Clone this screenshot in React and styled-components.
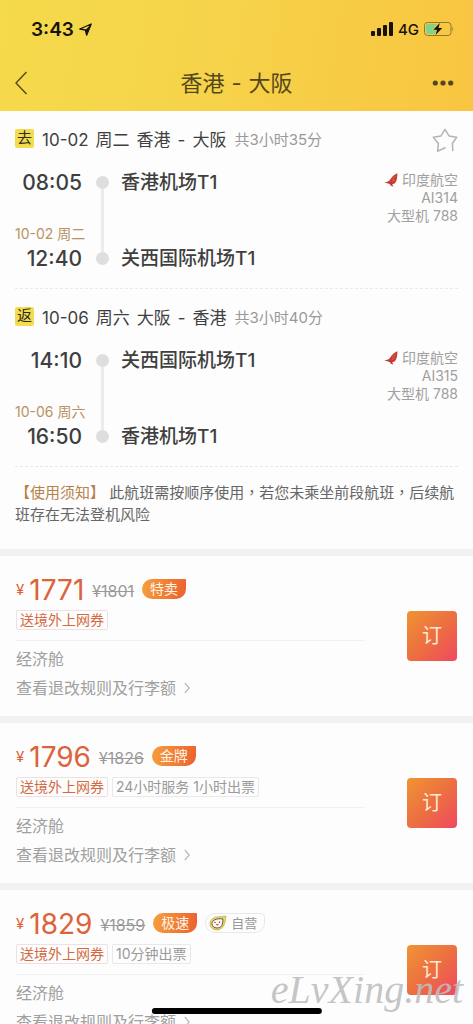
import React from "react";
import styled, { createGlobalStyle } from "styled-components";

const GlobalStyle = createGlobalStyle`
  *, *::before, *::after { box-sizing: border-box; }
  body {
    margin: 0;
    background: #fdfdfd;
    color: #3f3f3f;
    font-family: Inter, "Noto Sans CJK SC", sans-serif;
  }
  button { font: inherit; color: inherit; border: 0; padding: 0; background: none; cursor: pointer; }
  a { color: inherit; text-decoration: none; }
  h1, h2, p { margin: 0; font-weight: 400; }
  svg { display: block; flex: none; }
`;

const Screen = styled.div`
  position: relative;
  display: flex;
  flex-direction: column;
  height: 100vh;
  overflow: hidden;
`;

const Header = styled.header`
  flex: none;
  background: linear-gradient(100deg, #f5da4b 0%, #f6d34a 45%, #f9c540 100%);
`;

const StatusBar = styled.div`
  display: flex;
  align-items: center;
  justify-content: space-between;
  height: 58px;
  padding: 0 19px 0 31px;
  color: #17130a;
`;

const StatusGroup = styled.div`
  display: flex;
  align-items: center;
  gap: 5px;
`;

const Clock = styled.span`
  font-size: 19px;
  font-weight: 600;
`;

const Network = styled.span`
  font-size: 15px;
  font-weight: 500;
`;

const NavBar = styled.nav`
  display: flex;
  align-items: center;
  justify-content: space-between;
  height: 53px;
  padding: 0 14px 3px;
  color: #54471b;
`;

const Title = styled.h1`
  display: flex;
  align-items: baseline;
  gap: 7px;
  font-size: 22px;
  line-height: 32px;
`;

const NavButton = styled.button`
  display: flex;
  align-items: center;
  justify-content: ${(p) => (p.$end ? "flex-end" : "flex-start")};
  width: 32px;
  height: 32px;
  padding-right: ${(p) => (p.$end ? "5px" : "0")};
`;

const Content = styled.main`
  flex: 1;
  min-height: 0;
  overflow-y: auto;
  scrollbar-width: none;
`;

const Segment = styled.section`
  margin: 0 15px;
  padding: 17px 0;
  border-bottom: 1px dashed #e9e9e9;
`;

const SegmentHead = styled.div`
  display: flex;
  align-items: center;
  height: 24px;
  gap: 8px;
`;

const DirectionBadge = styled.span`
  width: 19px;
  height: 19px;
  margin-bottom: 4px;
  border-radius: 2px;
  background: #f3dc4e;
  color: #2e2a18;
  font-size: 15px;
  line-height: 18px;
  text-align: center;
`;

const Route = styled.h2`
  display: flex;
  align-items: baseline;
  gap: 7px;
  font-size: 17px;
  line-height: 24px;
  white-space: nowrap;
`;

const Duration = styled.span`
  color: #999;
  font-size: 15px;
  line-height: 24px;
  white-space: nowrap;
`;

const StarButton = styled.button`
  margin-left: auto;
`;

const SegmentBody = styled.div`
  display: flex;
  margin-top: 19px;
`;

const Times = styled.div`
  display: flex;
  flex-direction: column;
  width: 67px;
  font-size: 21px;
  font-weight: 500;
  line-height: 24px;
  text-align: right;
`;

const ArrivalDate = styled.span`
  margin: 29px 0 3px;
  color: #b99262;
  font-size: 14px;
  font-weight: 400;
  line-height: 20px;
  text-align: left;
  white-space: nowrap;
`;

const Rail = styled.div`
  display: flex;
  flex-direction: column;
  align-items: center;
  width: 13px;
  margin: 5px 12px 6px 14px;
`;

const Stop = styled.span`
  width: 13px;
  height: 13px;
  border-radius: 50%;
  background: #dedede;
`;

const Track = styled.span`
  flex: 1;
  width: 3px;
  background: #ececec;
`;

const Airports = styled.div`
  display: flex;
  flex: 1;
  flex-direction: column;
  justify-content: space-between;
  font-size: 19px;
  font-weight: 500;
  line-height: 24px;
  white-space: nowrap;
`;

const Carrier = styled.div`
  display: flex;
  flex-direction: column;
  align-items: flex-end;
  color: #a0a0a0;
  font-size: 14px;
  line-height: 18px;
`;

const CarrierName = styled.span`
  display: flex;
  align-items: center;
  gap: 4px;
`;

const Notice = styled.p`
  padding: 15px 15px 23px;
  color: #666;
  font-family: Inter, "Noto Sans CJK TC", sans-serif;
  font-size: 15px;
  line-height: 22px;
`;

const NoticeLabel = styled.span`
  color: #b5814a;
`;

const Fare = styled.article`
  display: flex;
  align-items: flex-start;
  padding: 18px 16px 16px;
  border-top: 7px solid #f2f2f2;
`;

const FareInfo = styled.div`
  flex: 1;
  margin-right: 43px;
`;

const PriceRow = styled.div`
  display: flex;
  align-items: center;
  height: 30px;
`;

const Price = styled.span`
  display: flex;
  align-items: center;
  gap: 5px;
  margin-top: 2px;
  color: #dc633a;
  font-size: 28px;
  line-height: 30px;
`;

const Currency = styled.span`
  font-size: 15px;
`;

const OldPrice = styled.del`
  margin: 4px 8px 0;
  color: #999;
  font-size: 16px;
  line-height: 20px;
`;

const Promo = styled.span`
  height: 20px;
  padding: 0 8px;
  border-radius: 10px 1px 10px 10px;
  background: linear-gradient(100deg, #f6a03c, #ec6030);
  color: #fff5e8;
  font-size: 14px;
  line-height: 20px;
`;

const SelfRun = styled.span`
  display: flex;
  align-items: center;
  gap: 4px;
  height: 20px;
  margin-left: 8px;
  padding: 0 7px 0 3px;
  border: 1px solid #e8e8e8;
  border-radius: 10px 4px 10px 10px;
  color: #999;
  font-size: 13px;
  line-height: 18px;
`;

const Tags = styled.div`
  display: flex;
  gap: 4px;
  margin-top: 6px;
`;

const Tag = styled.span`
  height: 20px;
  padding: 0 3px;
  border: 1px solid ${(p) => (p.$accent ? "#f1e0e0" : "#e9e9e9")};
  border-radius: 2px;
  color: ${(p) => (p.$accent ? "#d36a42" : "#999")};
  font-size: 14px;
  line-height: 18px;
  white-space: nowrap;
`;

const Details = styled.div`
  display: flex;
  flex-direction: column;
  align-items: flex-start;
  gap: 5px;
  margin-top: 10px;
  padding-top: 6px;
  border-top: 1px solid #f0f0f0;
  color: #a0a0a0;
  font-size: 16px;
  line-height: 24px;
`;

const RulesLink = styled.a`
  display: flex;
  align-items: center;
  gap: 8px;
`;

const BookButton = styled.button`
  flex: none;
  width: 50px;
  height: 50px;
  margin-top: 37px;
  border-radius: 4px;
  background: linear-gradient(135deg, #f09434 0%, #ec7040 50%, #f04860 100%);
  color: #ffe9d6;
  font-size: 20px;
  line-height: 50px;
`;

const Watermark = styled.span`
  position: absolute;
  right: 10px;
  bottom: 10px;
  color: rgba(190, 190, 190, 0.9);
  font-family: "Liberation Serif", serif;
  font-size: 40px;
  font-style: italic;
  line-height: 48px;
  pointer-events: none;
`;

const HomeIndicator = styled.span`
  position: absolute;
  left: 50%;
  bottom: 10px;
  width: 36%;
  height: 6px;
  border-radius: 3px;
  background: #000;
  transform: translateX(-50%);
`;

const LocationIcon = () => (
  <svg width="13" height="13" viewBox="0 0 13 13">
    <path d="M12.2 1 L7.6 12.2 L6.4 7 L0.8 6 Z" fill="none" stroke="#17130a" strokeWidth="1.3" strokeLinejoin="round" />
    <path d="M12.2 1 L7.6 12.2 L6.4 7 Z" fill="#17130a" />
  </svg>
);

const SignalIcon = () => (
  <svg width="22" height="14" viewBox="0 0 22 14" fill="#17130a">
    <rect x="0" y="9" width="4" height="5" rx="1" />
    <rect x="6" y="6" width="4" height="8" rx="1" />
    <rect x="12" y="3" width="4" height="11" rx="1" />
    <rect x="18" y="0" width="4" height="14" rx="1" />
  </svg>
);

const BatteryIcon = () => (
  <svg width="30" height="14" viewBox="0 0 30 14">
    <rect x="0.5" y="0.5" width="26.5" height="13" rx="3" fill="none" stroke="#8b7a38" />
    <path d="M28.2 4.6 Q30 7 28.2 9.4 Z" fill="#8b7a38" />
    <path d="M4 2 H13 L8 8 H12 L11 12 H4 Q2 12 2 10 V4 Q2 2 4 2Z" fill="#7ed488" />
    <path d="M15.8 1 L9.3 7.8 H13 L11.6 13 L18.3 6.1 H14.5 Z" fill="#17130a" />
  </svg>
);

const BackIcon = () => (
  <svg width="14" height="24" viewBox="0 0 14 24">
    <path d="M12.5 1 L2 12 L12.5 23" fill="none" stroke="currentColor" strokeWidth="1.4" />
  </svg>
);

const MoreIcon = () => (
  <svg width="22" height="6" viewBox="0 0 22 6" fill="currentColor">
    <circle cx="3.3" cy="3" r="2.6" />
    <circle cx="11" cy="3" r="2.6" />
    <circle cx="18.7" cy="3" r="2.6" />
  </svg>
);

const StarIcon = () => (
  <svg width="26" height="25" viewBox="0 0 26 25">
    <path
      d="M20.8 22.5 L20.4 15.3 L24.7 9.3 L17 7.9 L13 1.4 L9 7.9 L1.3 9.3 L6.4 15.4 L5.6 23.2 L13 19.8"
      fill="none"
      stroke="#b4b4b4"
      strokeWidth="1.5"
      strokeLinecap="round"
      strokeLinejoin="round"
    />
  </svg>
);

const CarrierLogo = () => (
  <svg width="14" height="14" viewBox="0 0 14 14">
    <path d="M13.4 0.2 C13.4 4.6 12.8 8.6 10.6 10.6 L8.2 11.2 L9.4 13.6 C7.4 13.3 6.2 12.2 5.6 11 L0.2 9.2 C3.6 8.8 5 8.2 6.2 6.4 C8.4 3.2 10.6 1.4 13.4 0.2Z" fill="#c23b34" />
    <path d="M8.2 6.2 L11.8 3.4 M7.8 8.6 L11 6.6" stroke="#e98a52" strokeWidth="0.6" />
  </svg>
);

const ChevronIcon = () => (
  <svg width="6" height="12" viewBox="0 0 6 12">
    <path d="M0.8 1 L5.2 6 L0.8 11" fill="none" stroke="#b8b8b8" strokeWidth="1.2" />
  </svg>
);

const MascotIcon = () => (
  <svg width="18" height="16" viewBox="0 0 18 16">
    <path d="M17 1 C16.6 4.4 16.4 7 15 10 C13.6 13.4 11 15 7.8 15 C3.8 15 1 12.2 1 8.7 C1 5 4 2.6 7.6 2 C10.8 1.4 14 1.8 17 1Z" fill="#f0da58" stroke="#a09a50" strokeWidth="0.6" />
    <path d="M13.8 3.8 C14.2 9.6 12.4 13 8 13 C5 13 3 11.2 3 8.6 C3 4.8 7.6 3.4 13.8 3.8Z" fill="#fff6f3" stroke="#5f5a48" strokeWidth="1" />
    <circle cx="6" cy="7.4" r="0.7" fill="#5a3d3d" />
    <circle cx="10.6" cy="7.2" r="0.7" fill="#5a3d3d" />
    <path d="M6.6 9 Q8.4 12 10 9Z" fill="#d9566a" />
  </svg>
);

const segments = [
  {
    direction: "去", day: "10-02", weekday: "周二", origin: "香港", destination: "大阪", duration: "共3小时35分",
    depart: "08:05", from: "香港机场T1", arrive: "12:40", to: "关西国际机场T1",
    flight: "AI314", favourite: true,
  },
  {
    direction: "返", day: "10-06", weekday: "周六", origin: "大阪", destination: "香港", duration: "共3小时40分",
    depart: "14:10", from: "关西国际机场T1", arrive: "16:50", to: "香港机场T1",
    flight: "AI315",
  },
];

const fares = [
  { price: "1771", old: "¥1801", promo: "特卖" },
  { price: "1796", old: "¥1826", promo: "金牌", service: "24小时服务 1小时出票" },
  { price: "1829", old: "¥1859", promo: "极速", service: "10分钟出票", selfRun: true },
];

export default function App() {
  return (
    <Screen>
      <GlobalStyle />
      <Header>
        <StatusBar>
          <StatusGroup>
            <Clock>3:43</Clock>
            <LocationIcon />
          </StatusGroup>
          <StatusGroup>
            <SignalIcon />
            <Network>4G</Network>
            <BatteryIcon />
          </StatusGroup>
        </StatusBar>
        <NavBar>
          <NavButton aria-label="返回"><BackIcon /></NavButton>
          <Title><span>香港</span><span>-</span><span>大阪</span></Title>
          <NavButton $end aria-label="更多"><MoreIcon /></NavButton>
        </NavBar>
      </Header>
      <Content>
        {segments.map((s) => (
          <Segment key={s.flight}>
            <SegmentHead>
              <DirectionBadge>{s.direction}</DirectionBadge>
              <Route>
                <span>{s.day}</span>
                <span>{s.weekday}</span>
                <span>{s.origin}</span>
                <span>-</span>
                <span>{s.destination}</span>
              </Route>
              <Duration>{s.duration}</Duration>
              {s.favourite && <StarButton aria-label="收藏"><StarIcon /></StarButton>}
            </SegmentHead>
            <SegmentBody>
              <Times>
                <span>{s.depart}</span>
                <ArrivalDate>{s.day} {s.weekday}</ArrivalDate>
                <span>{s.arrive}</span>
              </Times>
              <Rail><Stop /><Track /><Stop /></Rail>
              <Airports>
                <span>{s.from}</span>
                <span>{s.to}</span>
              </Airports>
              <Carrier>
                <CarrierName><CarrierLogo />印度航空</CarrierName>
                <span>{s.flight}</span>
                <span>大型机 788</span>
              </Carrier>
            </SegmentBody>
          </Segment>
        ))}
        <Notice>
          <NoticeLabel>【使用须知】</NoticeLabel> 此航班需按顺序使用，若您未乘坐前段航班，后续航班存在无法登机风险
        </Notice>
        {fares.map((f) => (
          <Fare key={f.price}>
            <FareInfo>
              <PriceRow>
                <Price><Currency>¥</Currency>{f.price}</Price>
                <OldPrice>{f.old}</OldPrice>
                <Promo>{f.promo}</Promo>
                {f.selfRun && <SelfRun><MascotIcon />自营</SelfRun>}
              </PriceRow>
              <Tags>
                <Tag $accent>送境外上网券</Tag>
                {f.service && <Tag>{f.service}</Tag>}
              </Tags>
              <Details>
                <span>经济舱</span>
                <RulesLink href="#rules">查看退改规则及行李额<ChevronIcon /></RulesLink>
              </Details>
            </FareInfo>
            <BookButton>订</BookButton>
          </Fare>
        ))}
      </Content>
      <HomeIndicator />
      <Watermark>eLvXing.net</Watermark>
    </Screen>
  );
}
